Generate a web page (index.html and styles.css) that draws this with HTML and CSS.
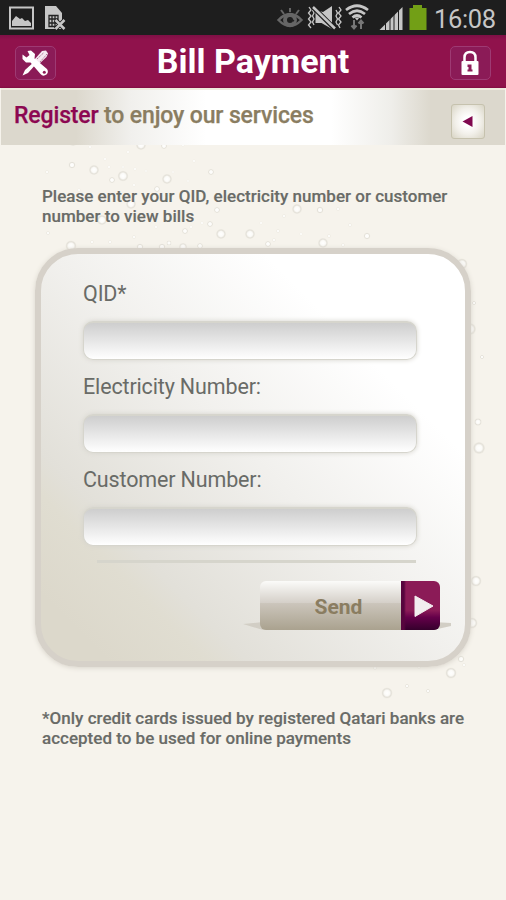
FILE: index.html
```html
<!DOCTYPE html>
<html lang="en">
<head>
<meta charset="utf-8">
<title>Bill Payment</title>
<link rel="stylesheet" href="styles.css">
</head>
<body>
<div class="statusbar">
  <svg class="status-left" width="75" height="35" viewBox="0 0 75 35">
    <rect x="10" y="7.500" width="23" height="21" fill="none" stroke="#c6c6c6" stroke-width="2"/>
    <path d="M12 26V21L16 16L20 19L22 18L25 21L28 20L31 23V26Z" fill="#c6c6c6"/>
    <path d="M45 6H56L62 13V29H45Z" fill="#c6c6c6"/>
    <path d="M49 15.500H58V26.500H49ZM52 15V27M55 15V27M49 19H58M49 23H58" fill="none" stroke="#222" stroke-width="1.300"/>
    <path d="M55.500 20L64.500 29M64.500 20L55.500 29" stroke="#1e1e1e" stroke-width="4.500"/>
    <path d="M55.500 20L64.500 29M64.500 20L55.500 29" stroke="#c6c6c6" stroke-width="2.500"/>
  </svg>
  <svg class="status-right" width="160" height="35" viewBox="272 0 160 35">
    <g fill="none" stroke="#666">
      <path d="M278.500 20Q290 8 301.500 20Q290 32 278.500 20Z" stroke-width="2.500"/>
      <circle cx="290" cy="20" r="5" stroke-width="4"/>
      <path d="M290 8V12M281 10L284 14M299 10L296 14" stroke-width="2"/>
    </g>
    <path d="M289 18L294 21" stroke="#222" stroke-width="1.500"/>
    <g fill="none" stroke="#c6c6c6" stroke-width="1.300">
      <path d="M309 7L311 10L308.500 13L311 16L308.500 19L311 22L308.500 25L311 28M312.500 10L314 13L312.500 16L314 19L312.500 22L314 25M339 7L341 10L338.500 13L341 16L338.500 19L341 22L338.500 25L340 28M336 10L337.500 13L336 16L337.500 19L336 22L337.500 25"/>
    </g>
    <path d="M315.500 10V23H321.500L332 29V6L323 12Z" fill="#c6c6c6"/>
    <path d="M313 7L335 29" stroke="#1e1e1e" stroke-width="4.600"/>
    <path d="M313 7L335 28.500" stroke="#c6c6c6" stroke-width="2.500"/>
    <g fill="none" stroke="#c6c6c6" stroke-width="2.700">
      <path d="M346 10Q357 1.500 368 10M349 14Q357 7.500 365 14M352.500 17.500Q357 13.500 361.500 17.500"/>
    </g>
    <path d="M354.500 17.500H359.500L357 20.500Z" fill="#c6c6c6"/>
    <path d="M354 20V28M351.500 25.500L354 28.500L356.500 25.500M361 29V21M358.500 23.500L361 20.500L363.500 23.500" fill="none" stroke="#777" stroke-width="2"/>
    <path d="M379.500 30L402.500 7V30Z" fill="#c6c6c6"/>
    <path d="M385.500 7V30M390 7V30M394 7V30M398.500 7V30" stroke="#1e1e1e" stroke-width="1"/>
    <path d="M409.500 8H413V5H422V8H426.500V30H409.500Z" fill="#729f16"/>
  </svg>
  <span class="clock">16:08</span>
</div>
<header class="header">
  <div class="icon-btn">
    <svg width="40" height="34" viewBox="0 0 40 34">
      <path d="M7.500 29.500L10 24L20 15L22 17L13 27Z" fill="#fff"/>
      <path d="M19 14L27 5L31 4.500L33 7.500L31.500 11L23 19Z" fill="#f5e8f0"/>
      <path d="M22 13L29 6.500M25 16L32 8" stroke="#a05a83" stroke-width=".8" stroke-dasharray="1.500 .8"/>
      <path d="M7.500 8.500L11.500 11.500L14.500 9L12.500 5L16 4.500L20 8L19.500 12.500L32 23Q34 26 31.500 28.500Q28 31 25.500 28L15.500 16.500L11 16.500L7.500 13Z" fill="#fff"/>
      <circle cx="29.300" cy="26.300" r="1.500" fill="#8d1c58"/>
    </svg>
  </div>
  <h1 class="title">Bill Payment</h1>
  <div class="icon-btn">
    <svg width="40" height="34" viewBox="0 0 40 34">
      <path d="M14.500 16V11.500Q14.500 6 20 6Q25.500 6 25.500 11.500V16" fill="none" stroke="#fff" stroke-width="2.500"/>
      <rect x="11.500" y="15" width="17" height="14" rx="1" fill="#fff"/>
      <path d="M17.500 18.500H21.500V23.500H22.500V25.500H17.500V23.500H18.500V21H17.500Z" fill="#8d1c58"/>
    </svg>
  </div>
</header>
<div class="band">
  <p class="tagline"><span class="accent">Register</span> to enjoy our services</p>
  <div class="back"><svg width="34" height="35" viewBox="0 0 34 35"><path d="M11.500 17.500L21.500 12V23Z" fill="#80084f"/></svg></div>
</div>
<main class="content">
  <svg class="bubbles" id="bubbles" width="506" height="755" viewBox="0 145 506 755">
    <defs><radialGradient id="bubble"><stop offset="0" stop-color="#fff"/><stop offset=".5" stop-color="#fbfaf7"/><stop offset=".78" stop-color="#e4e1d9"/><stop offset="1" stop-color="#f0ede5"/></radialGradient></defs>
  </svg>
  <p class="note intro">Please enter your QID, electricity number or customer<br>number to view bills</p>
  <form class="card">
    <label class="field"><span>QID*</span><input type="text"></label>
    <label class="field"><span>Electricity Number:</span><input type="text"></label>
    <label class="field"><span>Customer Number:</span><input type="text"></label>
    <div class="rule"></div>
    <div class="send">
      <svg class="shadow" width="208" height="10" viewBox="0 0 208 10"><path d="M0 2L20 0H190L208 1V4L190 8H20Z" fill="#d2cec5"/></svg>
      <button class="send-btn" type="button"><span class="send-label">Send</span><span class="send-arrow"><svg width="39" height="49" viewBox="0 0 39 49"><path d="M14 15L32 25L14 35.500Z" fill="#f2edef" stroke="#f2edef" stroke-linejoin="round"/></svg></span></button>
    </div>
  </form>
  <p class="note outro">*Only credit cards issued by registered Qatari banks are<br>accepted to be used for online payments</p>
</main>
<script src="bubbles.js"></script>
</body>
</html>
```
FILE: styles.css
```css
* { box-sizing: border-box; }
body { margin: 0; width: 506px; height: 900px; overflow: hidden; background: #f6f3ec; font-family: Roboto, sans-serif; }
p, h1 { margin: 0; }
svg { display: block; }
.statusbar { height: 35px; background: #1e1e1e; display: flex; }
.status-right { margin-left: 197px; }
.clock { margin-left: 2px; color: #c6c6c6; font-size: 25.5px; letter-spacing: -.35px; line-height: 39px; white-space: nowrap; }
.header { height: 53px; padding: 11px 15px 0; display: flex; justify-content: space-between; background: linear-gradient(#7e1045, #90124c 5px, #90124c 51px, #810b40); }
.icon-btn { width: 41px; height: 34px; border: 1px solid #9e3a73; border-radius: 5px; background: #8b1b57; }
.icon-btn svg { margin: -1px; }
.title { color: #fff; font-size: 34px; font-weight: 700; line-height: 40px; margin-top: -5px; white-space: nowrap; }
.band { height: 57px; margin: 0 1px; padding: 0 20px 0 13px; border-top: 2px solid #eee9dd; display: flex; justify-content: space-between; background: linear-gradient(90deg, #dcd8cd 0, #dcd8cd 75px, #f1f0ed 130px, #fff 205px, #fff 330px, #efeeea 390px, #dcd8cd 430px); }
.tagline { font-size: 23px; font-weight: 500; letter-spacing: -.14px; line-height: 27px; margin-top: 12px; color: #8a7d61; white-space: nowrap; -webkit-text-stroke: .25px; }
.accent { color: #8c0751; }
.back { width: 34px; height: 35px; margin-top: 14px; border: 1px solid #c6c2ae; border-radius: 3px; background: radial-gradient(#fff 20%, #f2f0ea 55%, #d8d4c4); }
.back svg { margin: -1px; }
.content { position: relative; height: 755px; padding-top: 42px; }
.bubbles { position: absolute; left: 0; top: 0; }
.note { position: relative; margin-left: 42px; color: #696b67; font-size: 17px; font-weight: 500; letter-spacing: .01px; line-height: 19.5px; white-space: nowrap; -webkit-text-stroke: .15px; }
.card { position: relative; width: 436px; height: 419px; margin: 22px 0 0 35px; padding: 27px 0 0 42px; border: 6px solid #d6d1c9; border-radius: 43px; background: linear-gradient(45deg, #dcd8cb 8%, #e0ddd1 20%, #e2e0d9 25%, #f1f0ed 50%, #fff 76%); box-shadow: 0 1px 5px #d8d4cb; }
.field { display: block; height: 93px; color: #696b67; font-size: 21.5px; letter-spacing: -.15px; line-height: 25px; white-space: nowrap; }
.field span { display: block; width: max-content; }
.field input { display: block; width: 334px; height: 39px; margin-top: 15px; padding: 0 12px; border: 1px solid #d6d5cd; border-top-width: 2px; border-radius: 10px; background: linear-gradient(#cecece, #fff); box-shadow: 0 0 5px #d5d3cc; outline: 0; }
.rule { width: 319px; height: 3px; margin: 0 0 0 14px; background: #d6d5cc; }
.send { position: relative; width: 181px; margin: 18px 0 0 177px; }
.shadow { position: absolute; left: -17px; top: 41px; }
.send-btn { position: relative; display: flex; width: 180px; height: 49px; padding: 0; overflow: hidden; border: 0; border-radius: 6px; background: linear-gradient(#fbfbf9, #d5d0c9 44%, #cbc5bb 46%, #aaa28f); font-family: Roboto, sans-serif; }
.send-label { width: 141px; padding: 2px 0 0 16px; line-height: 49px; font-size: 21px; font-weight: 700; color: #8a7d61; }
.send-arrow { width: 39px; height: 49px; background: linear-gradient(90deg, #57053e 0, #57053e 3px, transparent 5px), linear-gradient(#8b1b57 0, #8b1b57 60%, #65004a 74%, #35002c); }
.outro { margin-top: 42px; }
```
FILE: bubbles.js
```js
const bubbles = [
  [73,141,5],[90,147,1.5],[141,145,5],[164,146,3],[183,145,1.5],[128,152,1.5],[105,159,1.5],[72,165,3.3],[94,170,5],[109,167,1.5],[123,167,1.3],[135,169,1.5],[146,171,1.3],[123,176,5.3],[112,180,3],[167,179,5],[173,172,1.3],[188,181,1.3],[211,172,3],[194,161,1.5],[134,185,1.5],[157,189,3],[47,172,1.7],[131,204,5],[102,220,5],[79,190,1.5],[217,210,3],[210,224,3],[185,231,3],[221,234,5],[250,234,5],[191,227,1.5],[202,223,1.5],[48,233,1.8],[152,210,1.2],[156,227,1.5],
  [297,209,5],[320,210,3.3],[338,209,1.7],[284,216,1.7],[261,223,1.5],[350,225,1.7],[278,231,1.7],[301,234,1.5],[329,236,1.7],[323,243,5],[367,236,3.2],[268,244,3],[274,240,1.7],[343,245,1.7],[462,264,5.5],
  [71,246,5.5],[92,242,1.7],[110,242,1.7],[134,237,1.7],[140,247,3.3],[162,247,3.3],[169,243,2.5],[183,247,4],[200,246,3],
  [474,303,2],[470,329,6],[482,357,2],[478,422,3.7],[479,448,6],[476,581,5.5],[472,623,5.5],[461,659,3.3],[464,665,1.7],[451,673,5.5],[387,693,5.5],[407,686,1.9],[428,691,1.9],[375,668,1.8],[419,667,1.7]
];
const layer = document.getElementById("bubbles");
for (const [x, y, r] of bubbles) {
  const c = document.createElementNS("http://www.w3.org/2000/svg", "circle");
  c.setAttribute("cx", x);
  c.setAttribute("cy", y);
  c.setAttribute("r", r);
  c.setAttribute("fill", "url(#bubble)");
  layer.appendChild(c);
}
```
